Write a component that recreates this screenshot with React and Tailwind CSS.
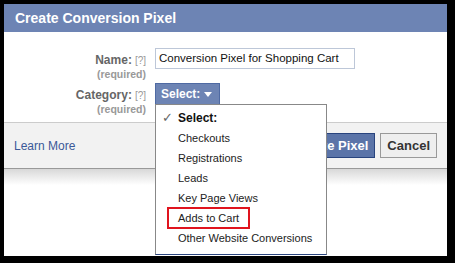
const items = [
  "Checkouts",
  "Registrations",
  "Leads",
  "Key Page Views",
  "Adds to Cart",
  "Other Website Conversions",
];

const FieldLabel = ({ name }) => (
  <div className="w-[142px] shrink-0 text-right leading-none">
    <div>
      <span className="text-[12px] font-bold text-[#666]">{name}:</span>
      <span className="ml-[3px] text-[10px] text-[#999]">[?]</span>
    </div>
    <div className="mt-[2px] text-[10.5px] font-bold text-[#999]">(required)</div>
  </div>
);

export default function App() {
  return (
    <div
      className="w-[455px] h-[263px] bg-black pt-1 pl-1 pr-2 pb-[7px]"
      style={{ fontFamily: '"Liberation Sans", Arial, sans-serif' }}
    >
      <div className="relative h-full bg-white overflow-hidden">
        <div className="h-7 bg-[#6d84b4] pl-[11px] flex items-center">
          <h1 className="text-[14px] font-bold text-white">Create Conversion Pixel</h1>
        </div>

        <div className="h-[90px] pt-4 flex flex-col">
          <div className="h-[35px] flex gap-[9px] items-start">
            <div className="pt-[3px]">
              <FieldLabel name="Name" />
            </div>
            <div className="w-[200px] h-[21px] border border-[#bdc7d8] px-[3px] flex items-center text-[11.5px] text-[#111]">
              Conversion Pixel for Shopping Cart
            </div>
          </div>
          <div className="flex gap-[9px] items-start">
            <div className="pt-[3px]">
              <FieldLabel name="Category" />
            </div>
            <div className="w-[65px] h-[21px] bg-[#6d84b4] border border-[#4f6aa3] border-b-0 pl-[5px] flex items-center gap-[4px] text-[12px] font-bold text-white">
              Select:
              <span className="w-0 h-0 border-x-[4px] border-x-transparent border-t-[5px] border-t-white" />
            </div>
          </div>
        </div>

        <div className="h-[47px] bg-[#f2f2f2] border-t border-[#ccc] border-b border-b-[#999] flex items-center justify-between pl-[10px] pr-[10px]">
          <a className="text-[12px] text-[#3b5998]">Learn More</a>
          <div className="flex gap-[5px]">
            <button className="h-[25px] px-[6px] bg-[#5b74a8] border border-[#29447e] text-[13px] font-bold text-white">
              Create Pixel
            </button>
            <button className="h-[25px] px-[6px] bg-[#eee] border border-[#999] text-[13px] font-bold text-[#333]">
              Cancel
            </button>
          </div>
        </div>
        <div className="h-4 bg-gradient-to-b from-[#d8d8d8] to-white" />

        <div className="absolute left-[151px] top-[100px] w-[172px] h-[151px] bg-white border border-[#888] border-b-[#29447e] pt-[3px]">
          <div className="h-5 flex items-center text-[12px] font-bold text-[#111]">
            <span className="w-[22px] pl-[6px] text-[#666] font-normal text-[13px]">✓</span>
            Select:
          </div>
          {items.map((item) => (
            <div key={item} className="h-5 flex items-center pl-[22px] text-[11px] text-[#222]">
              {item === "Adds to Cart" ? (
                <span className="-ml-[11px] px-[9px] h-[22px] flex items-center border-2 border-[#e0141e]">
                  {item}
                </span>
              ) : (
                item
              )}
            </div>
          ))}
        </div>
      </div>
    </div>
  );
}
